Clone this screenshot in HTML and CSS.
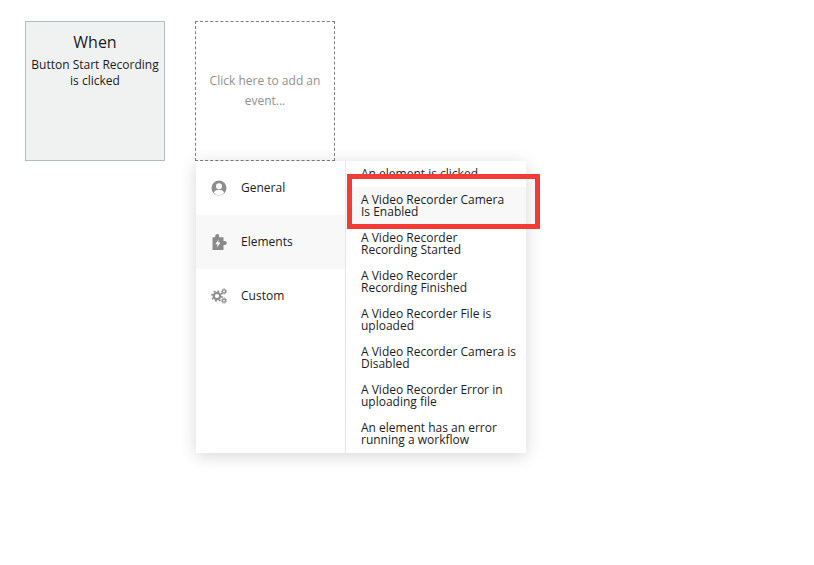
FILE: index.html
```
<!DOCTYPE html>
<html lang="en">
<head>
<meta charset="utf-8">
<title>Workflow event</title>
<link rel="stylesheet" href="styles.css">
</head>
<body>
<div class="stage">
  <div class="cards">
    <div class="card card-when">
      <div class="card-title">When</div>
      <div class="card-text">Button Start Recording is clicked</div>
    </div>
    <div class="card card-add">Click here to add an event...</div>
  </div>
  <div class="menu">
    <div class="cats">
      <div class="cat">
        <svg class="cat-icon" viewBox="0 0 16 16"><circle cx="8" cy="8" r="7.5" fill="#8e8e8e"/><circle cx="8" cy="6.2" r="3" fill="#fff"/><path d="M2.9 13a5.2 4 0 0 1 10.2 0A6.8 6.8 0 0 1 2.9 13z" fill="#fff"/></svg>
        <span>General</span>
      </div>
      <div class="cat cat-active">
        <svg class="cat-icon" viewBox="0 0 16 16"><path d="M1.5 3.2H4.2V2a2 2 0 0 1 4 0v1.2H12.5V7h1.3a2 2 0 0 1 0 4h-1.3v5H1.5z" fill="#8a8a8a"/><path d="M7.8 5.2 4.4 10.2h2.3l-.9 3.6 3.6-5.4H7z" fill="#fff"/></svg>
        <span>Elements</span>
      </div>
      <div class="cat">
        <svg class="cat-icon" viewBox="0 0 16 16"><g fill="none" stroke="#8e8e8e"><circle cx="6" cy="8" r="3.2" stroke-width="2.2"/><circle cx="6" cy="8" r="5" stroke-width="1.6" stroke-dasharray="1.9 2"/><circle cx="13" cy="3.4" r="1.6" stroke-width="1.3"/><circle cx="13" cy="3.4" r="2.7" stroke-width="1" stroke-dasharray="1.2 1.2"/><circle cx="13" cy="12.6" r="1.6" stroke-width="1.3"/><circle cx="13" cy="12.6" r="2.7" stroke-width="1" stroke-dasharray="1.2 1.2"/></g></svg>
        <span>Custom</span>
      </div>
    </div>
    <div class="events">
      <div class="event">An element is clicked</div>
      <div class="event event-active">A Video Recorder Camera<br>Is Enabled</div>
      <div class="event">A Video Recorder<br>Recording Started</div>
      <div class="event">A Video Recorder<br>Recording Finished</div>
      <div class="event">A Video Recorder File is uploaded</div>
      <div class="event">A Video Recorder Camera is Disabled</div>
      <div class="event">A Video Recorder Error in uploading file</div>
      <div class="event">An element has an error running a workflow</div>
    </div>
  </div>
  <div class="callout"></div>
</div>
</body>
</html>
```
FILE: styles.css
```
* {
  box-sizing: border-box;
}

html,
body {
  margin: 0;
  height: 100%;
  overflow: hidden;
  background: #fff;
}

body {
  font-family: "Open Sans", "Liberation Sans", sans-serif;
  color: #1c1c1c;
}

.stage {
  position: relative;
  width: 814px;
  height: 565px;
  padding: 21px 25px;
}

.cards {
  display: flex;
  gap: 30px;
}

.card {
  width: 140px;
  height: 140px;
  text-align: center;
}

.card-when {
  background: #f0f2f1;
  border: 1px solid #aebcc4;
  padding: 9px 4px 0;
}

.card-title {
  font-size: 16px;
  line-height: 22px;
  margin-bottom: 4px;
}

.card-text {
  font-size: 12px;
  line-height: 16px;
}

.card-add {
  border: 1px dashed #7d7d7d;
  color: #8f8f8f;
  font-size: 12px;
  line-height: 20px;
  padding: 49px 10px 0;
}

.menu {
  position: absolute;
  left: 196px;
  top: 161px;
  width: 330px;
  height: 292px;
  display: flex;
  background: #fff;
  box-shadow: 0 3px 16px rgba(0, 0, 0, 0.16);
}

.cats {
  width: 150px;
  border-right: 1px solid #e6e6e6;
}

.cat {
  height: 54px;
  display: flex;
  align-items: center;
  gap: 14px;
  padding-left: 15px;
  font-size: 12px;
}

.cat span {
  margin-bottom: 2px;
}

.cat-active {
  background: #f8f8f8;
}

.cat-icon {
  width: 16px;
  height: 16px;
  flex: none;
}

.events {
  flex: 1;
}

.event {
  padding: 7px 8px 7px 15px;
  font-size: 12px;
  line-height: 12px;
}

.event-active {
  background: #f8f8f8;
}

.callout {
  position: absolute;
  left: 347px;
  top: 174px;
  width: 193px;
  height: 55px;
  border: 5px solid #f23a36;
}
```
